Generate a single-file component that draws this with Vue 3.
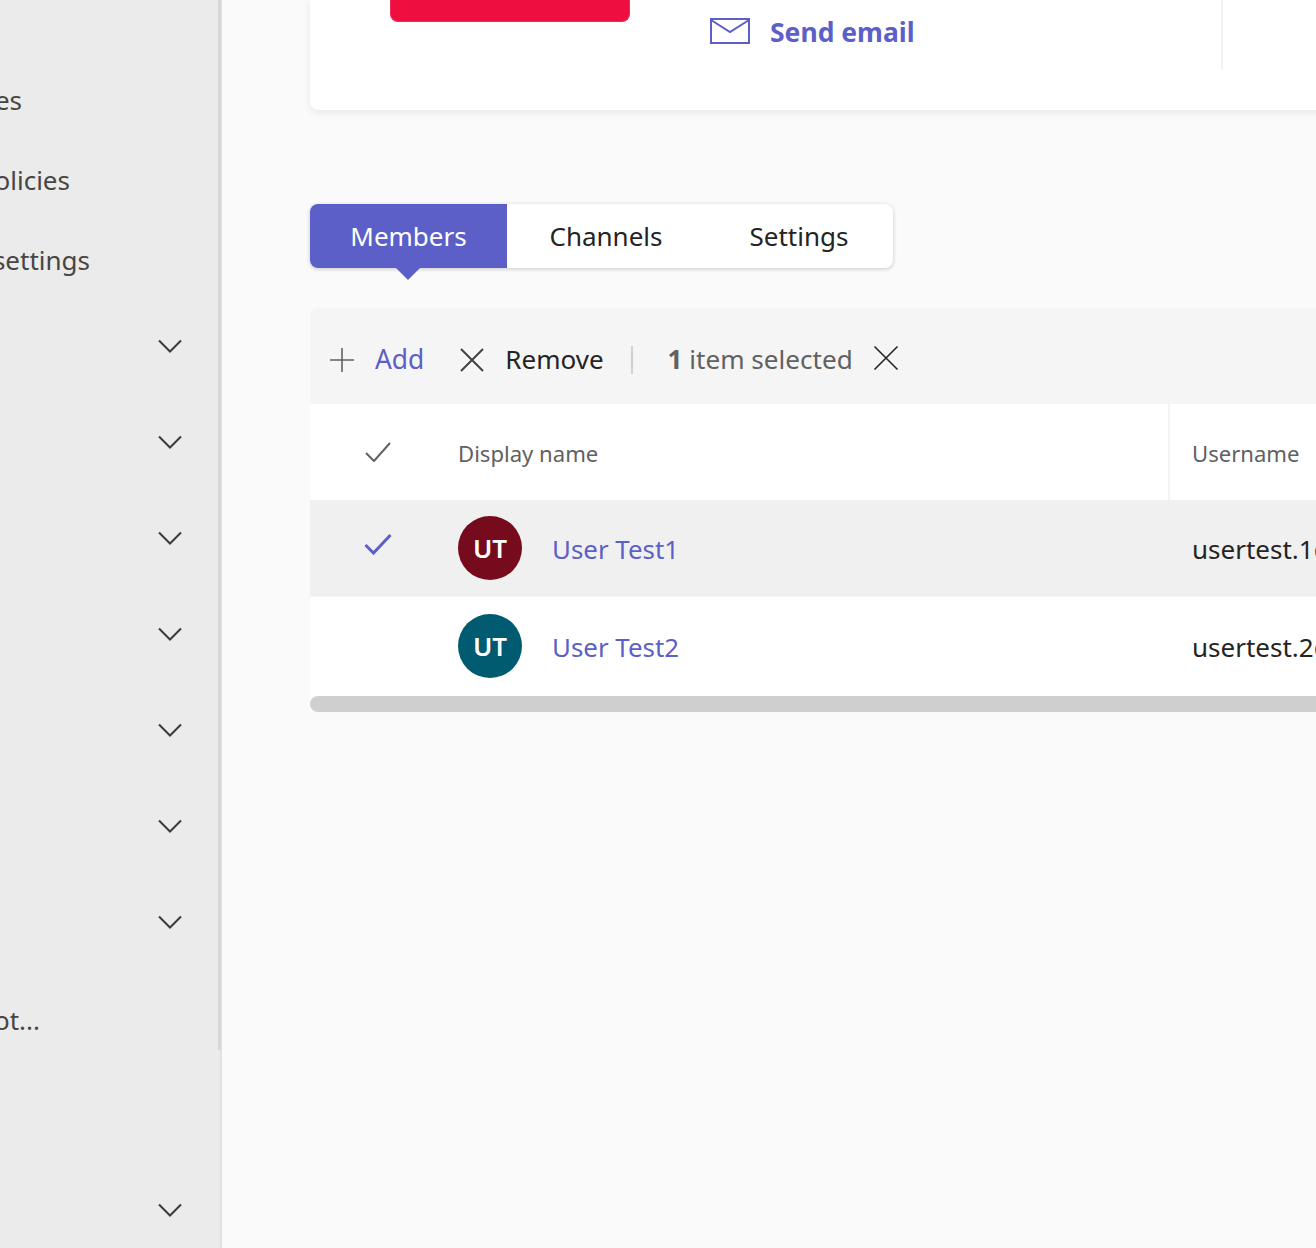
<script setup>
const topLinks = [
  { label: 'Team templates', width: 22 },
  { label: 'Teams policies', width: 70 },
  { label: 'Teams settings', width: 90 },
]
const groups = 7
const users = [
  { name: 'User Test1', mail: 'usertest.1@contoso.com', color: '#750b1c', selected: true },
  { name: 'User Test2', mail: 'usertest.2@contoso.com', color: '#005b70', selected: false },
]
</script>

<template>
  <div class="page">
    <aside class="sidebar">
      <div class="side-top">
        <div v-for="l in topLinks" :key="l.label" class="side-link">
          <span class="side-text" :style="{ width: l.width + 'px' }"><span>{{ l.label }}</span></span>
        </div>
      </div>
      <div v-for="n in groups" :key="n" class="side-group">
        <svg class="chev" width="24" height="14" viewBox="0 0 24 14"><path d="M1 1.5 12 12.5 23 1.5" fill="none" stroke="#3b3a39" stroke-width="2"/></svg>
      </div>
      <div class="side-link side-last">
        <span class="side-text" style="width: 40px"><span>Teams chatbot...</span></span>
      </div>
      <div class="side-group side-end">
        <svg class="chev" width="24" height="14" viewBox="0 0 24 14"><path d="M1 1.5 12 12.5 23 1.5" fill="none" stroke="#3b3a39" stroke-width="2"/></svg>
      </div>
      <div class="scroll-thumb"></div>
    </aside>

    <main class="main">
      <section class="card">
        <div class="red-btn"></div>
        <div class="email">
          <svg width="40" height="26" viewBox="0 0 40 26"><path d="M1 1h38v24H1zM1 2l19 12L39 2" fill="none" stroke="#5b5fc7" stroke-width="2"/></svg>
          <span class="email-text">Send email</span>
        </div>
        <div class="card-rule"></div>
      </section>

      <nav class="tabs">
        <div class="tab active">Members</div>
        <div class="tab ch">Channels</div>
        <div class="tab se">Settings</div>
      </nav>

      <div class="toolbar">
        <svg class="ic-plus" width="24" height="24" viewBox="0 0 24 24"><path d="M12 0v24M0 12h24" stroke="#616161" stroke-width="1.6" fill="none"/></svg>
        <span class="tool-text add">Add</span>
        <svg class="ic-x" width="24" height="24" viewBox="0 0 24 24"><path d="M1 1l22 22M23 1 1 23" stroke="#424242" stroke-width="2" fill="none"/></svg>
        <span class="tool-text remove">Remove</span>
        <span class="sep"></span>
        <span class="tool-text count"><b>1</b> item selected</span>
        <svg class="ic-x2" width="26" height="26" viewBox="0 0 26 26"><path d="M1.500 1.500l23 23M24.500 1.500l-23 23" stroke="#252423" stroke-width="1.600" fill="none"/></svg>
      </div>

      <div class="table">
        <div class="thead">
          <div class="cell-check head-check">
            <svg width="26" height="20" viewBox="0 0 26 20"><path d="M1 11l8 8L25 1" stroke="#616161" stroke-width="2" fill="none"/></svg>
          </div>
          <div class="th-name"><span class="th-text">Display name</span></div>
          <div class="th-user"><span class="th-text">Username</span></div>
        </div>
        <div v-for="u in users" :key="u.name" class="row" :class="{ selected: u.selected }">
          <div class="cell-check">
            <svg v-if="u.selected" width="28" height="22" viewBox="0 0 28 22"><path d="M1.500 12l8 8L26.500 2" stroke="#5b5fc7" stroke-width="3" fill="none"/></svg>
          </div>
          <div class="td-name">
            <span class="avatar" :style="{ background: u.color }">UT</span>
            <span class="user-link">{{ u.name }}</span>
          </div>
          <div class="td-user">{{ u.mail }}</div>
        </div>
        <div class="hscroll"></div>
      </div>
    </main>
  </div>
</template>

<style>
html, body { margin: 0; background: #fafafa; }
</style>

<style scoped>
.page {
  display: flex;
  width: 1316px;
  height: 1248px;
  overflow: hidden;
  background: #fafafa;
  font-family: "Noto Sans", "Open Sans", sans-serif;
  font-size: 26px;
  color: #252423;
}
.sidebar {
  position: relative;
  flex: none;
  box-sizing: border-box;
  width: 222px;
  height: 1248px;
  padding-top: 60px;
  background: #ebebeb;
  box-shadow: inset -2px 0 0 #e1e1e1;
  overflow: hidden;
}
.side-link { height: 80px; display: flex; align-items: center; color: #484644; }
.side-text { display: flex; justify-content: flex-end; white-space: nowrap; }
.side-group {
  height: 96px;
  display: flex;
  align-items: center;
  justify-content: flex-end;
  box-sizing: border-box;
  padding: 0 40px 4px 0;
}
.side-last { margin-top: 8px; }
.side-end { margin-top: 104px; }
.scroll-thumb {
  position: absolute;
  top: 0;
  right: 1px;
  width: 3px;
  height: 1050px;
  background: #d8d8d8;
}
.main { flex: 1; min-width: 0; padding-left: 88px; overflow: hidden; }
.card {
  display: flex;
  box-sizing: border-box;
  width: 1300px;
  height: 110px;
  padding-left: 80px;
  background: #fff;
  border-radius: 0 0 0 8px;
  box-shadow: 0 2px 8px rgba(0, 0, 0, 0.08);
}
.red-btn {
  box-sizing: border-box;
  width: 240px;
  height: 22px;
  background: #ef0e40;
  border: 1px solid #f02d57;
  border-top: 0;
  border-radius: 0 0 8px 8px;
}
.email {
  display: flex;
  align-items: center;
  gap: 20px;
  height: 26px;
  margin: 18px 0 0 80px;
  color: #5b5fc7;
  font-weight: 700;
}
.email-text { margin-top: 2px; font-size: 26.5px; }
.card-rule { width: 2px; height: 70px; margin-left: 306px; background: #f3f3f3; }
.tabs {
  position: relative;
  display: flex;
  width: 583px;
  height: 64px;
  margin-top: 94px;
  background: #fff;
  border-radius: 8px;
  box-shadow: 0 1px 4px rgba(0, 0, 0, 0.2);
}
.tab { display: flex; align-items: center; justify-content: center; height: 64px; }
.tab.active {
  position: relative;
  width: 197px;
  color: #fff;
  background: #5b5fc7;
  border-radius: 8px 0 0 8px;
}
.tab.active::after {
  content: "";
  position: absolute;
  left: 86px;
  top: 64px;
  border-left: 12px solid transparent;
  border-right: 12px solid transparent;
  border-top: 12px solid #5b5fc7;
}
.tab.ch { width: 198px; }
.tab.se { width: 188px; }
.toolbar {
  display: flex;
  align-items: center;
  box-sizing: border-box;
  width: 1300px;
  height: 96px;
  margin-top: 40px;
  padding: 8px 0 0 20px;
  background: #f5f5f5;
  border-radius: 8px 0 0 0;
}
.tool-text { margin-bottom: 2px; }
.ic-plus { flex: none; }
.add { margin-left: 21px; color: #5b5fc7; font-size: 26.4px; }
.ic-x { flex: none; margin-left: 36px; }
.remove { margin-left: 21px; }
.sep { width: 2px; height: 28px; margin-left: 27px; background: #d2d0ce; }
.count { margin-left: 35px; color: #616161; font-size: 26.1px; }
.count b { font-weight: 700; }
.ic-x2 { flex: none; margin: -4px 0 0 20px; }
.table { width: 1300px; background: #fff; }
.thead, .row { display: flex; align-items: center; }
.thead { height: 96px; color: #616161; font-size: 22.1px; }
.th-text { margin-top: 2px; }
.row { height: 96px; margin-bottom: 2px; }
.row.selected { background: #f0f0f0; box-shadow: 0 1px 0 #f6f6f6; }
.cell-check {
  flex: none;
  display: flex;
  justify-content: center;
  box-sizing: border-box;
  width: 148px;
  padding: 0 12px 8px 0;
}
.head-check { padding-bottom: 0; }
.th-name {
  flex: none;
  display: flex;
  align-items: center;
  box-sizing: border-box;
  width: 712px;
  height: 96px;
  border-right: 2px solid #f3f3f3;
}
.th-user { display: flex; align-items: center; height: 96px; padding-left: 22px; }
.td-name { flex: none; display: flex; align-items: center; gap: 30px; width: 712px; }
.td-user { margin-top: 1px; padding-left: 22px; white-space: nowrap; }
.avatar {
  display: flex;
  align-items: center;
  justify-content: center;
  width: 64px;
  height: 64px;
  border-radius: 50%;
  color: #fff;
  font-weight: 600;
}
.user-link { margin-top: 1px; color: #5b5fc7; font-size: 25.9px; }
.hscroll { height: 16px; background: #cfcfcf; border-radius: 8px 0 0 8px; }
</style>
